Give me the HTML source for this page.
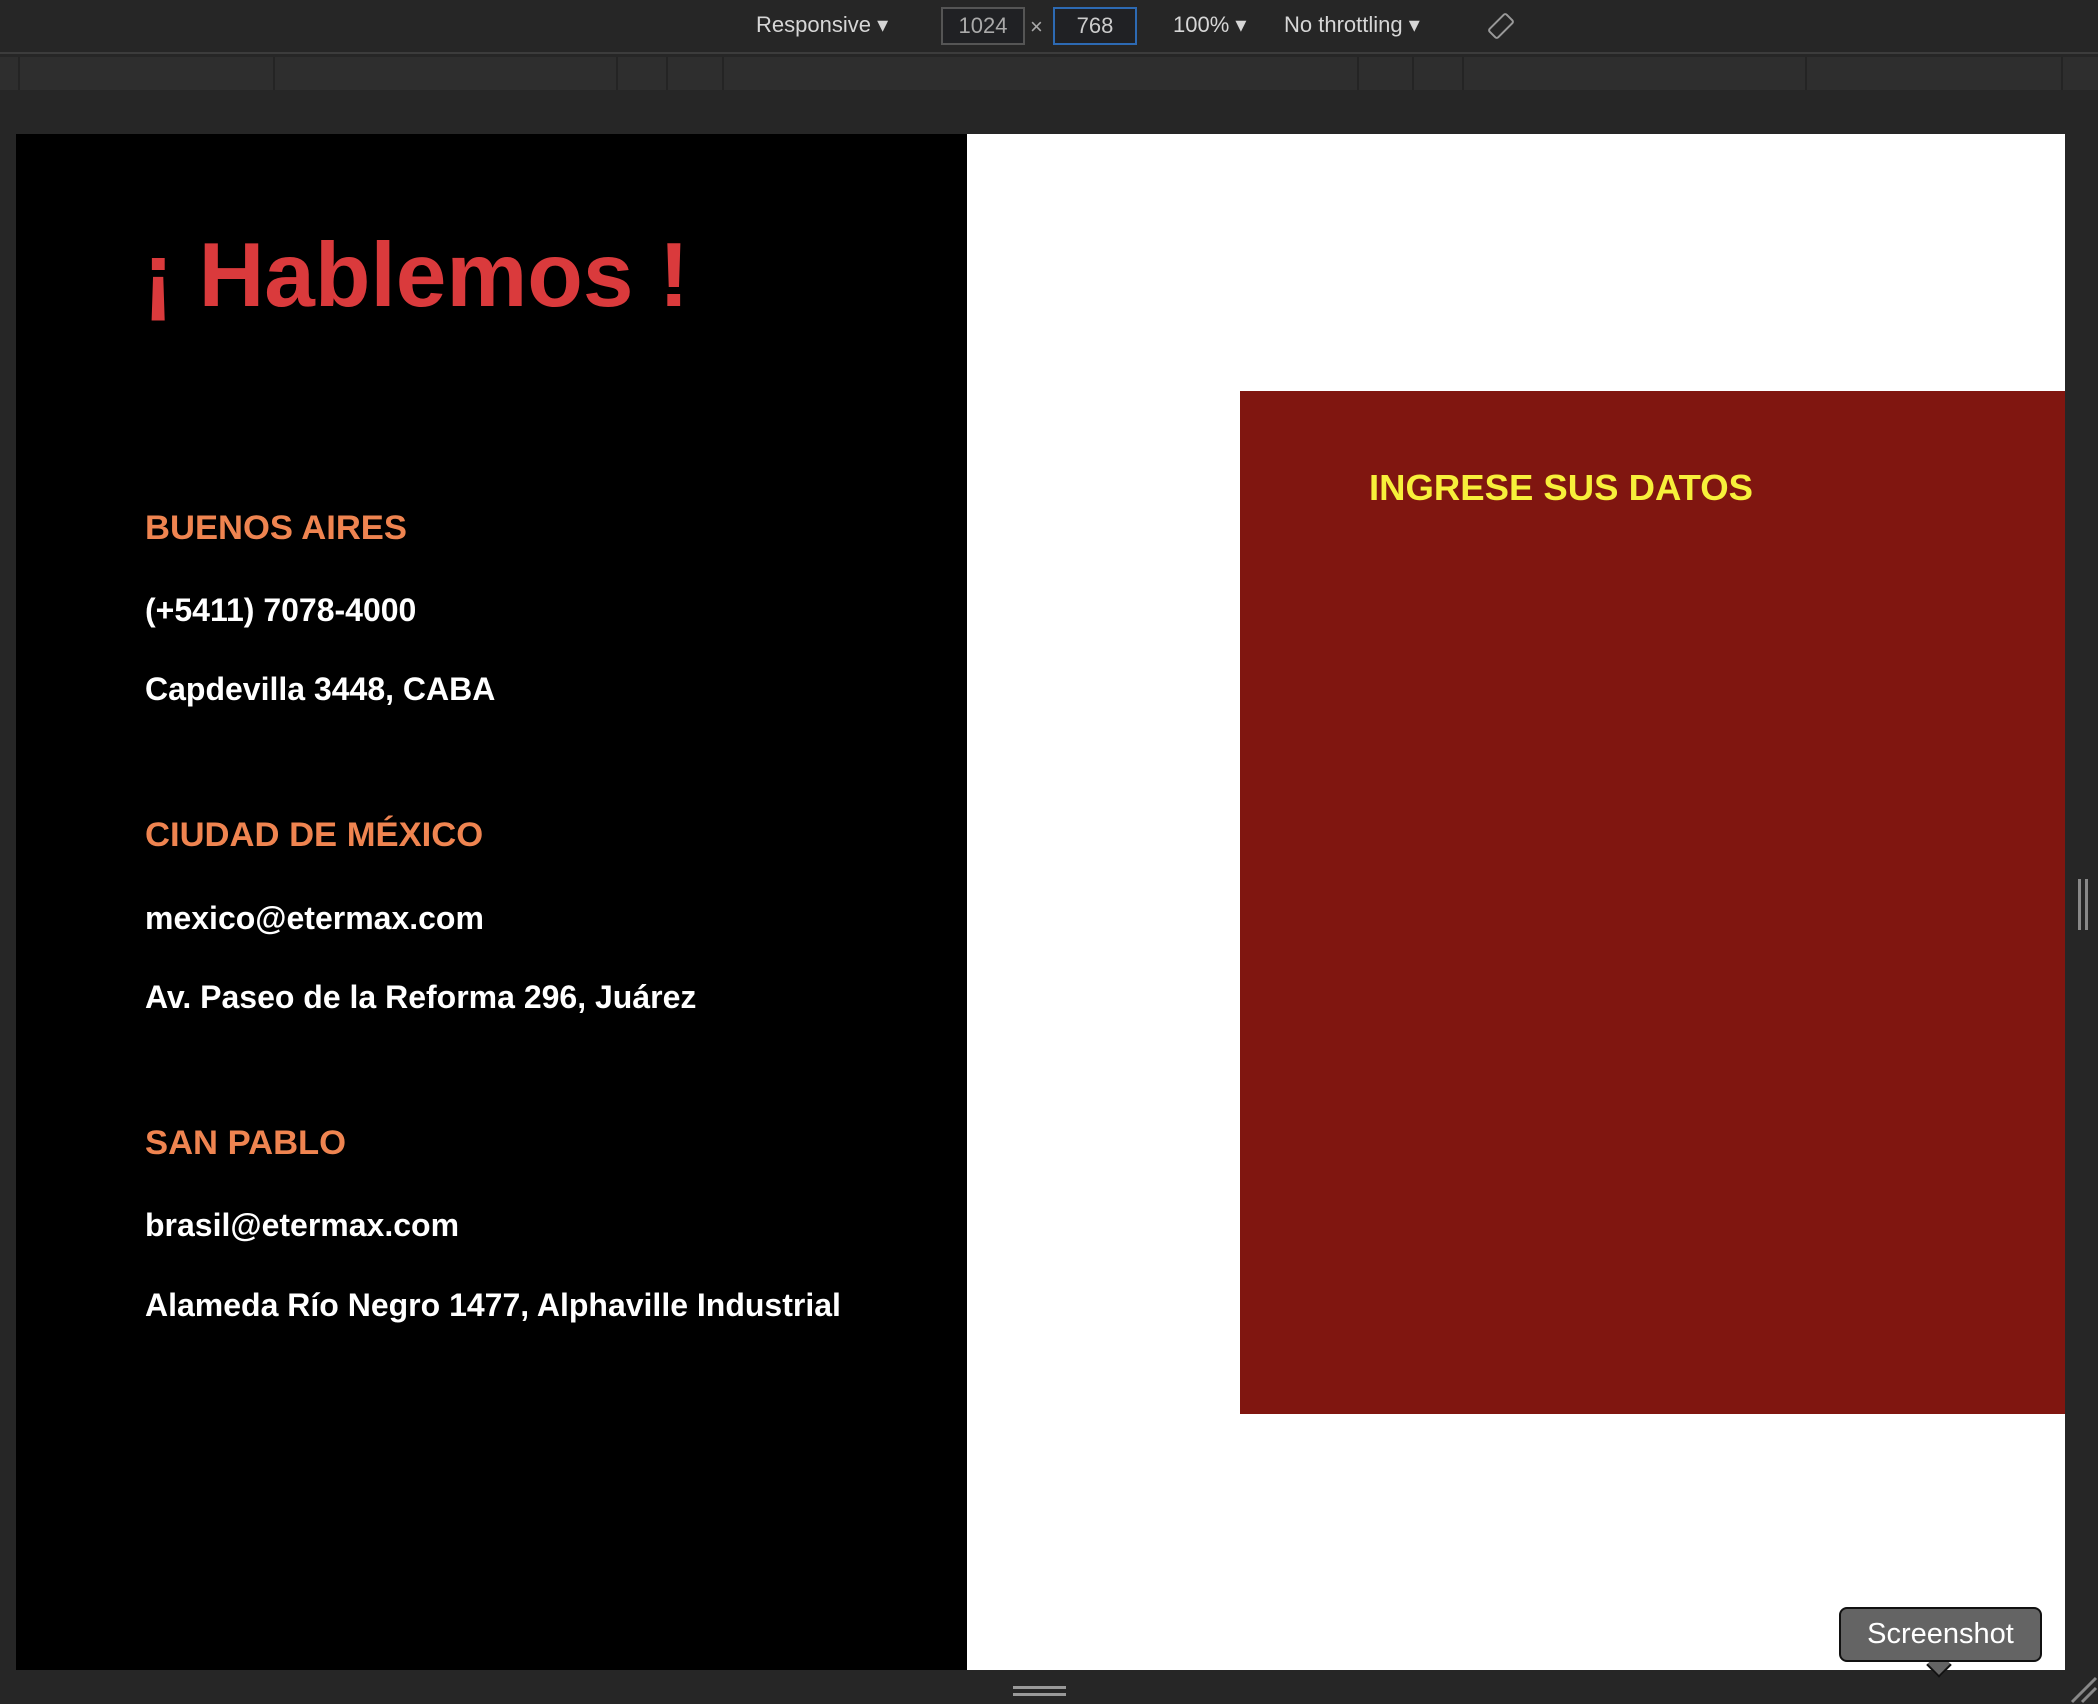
<!DOCTYPE html>
<html><head><meta charset="utf-8"><style>
*{margin:0;padding:0;box-sizing:border-box}
body{width:2098px;height:1704px;background:#262626;position:relative;overflow:hidden;font-family:"Liberation Sans",Arial,sans-serif}
.a{position:absolute}
.tb{color:#d6d6d6;font-size:22px;top:12px}
.inp{top:7px;height:38px;width:84px;border:2px solid #555;background:#202124;color:#aaa;font-size:22px;text-align:center;line-height:34px}
.w{color:#fff;font-weight:bold;font-size:32px;left:145px}
.o{color:#ef8450;font-weight:bold;font-size:34.6px;left:145px}
.sep{top:57px;width:2px;height:33px;background:#242424}
</style></head><body>
<div class="a" style="left:0;top:0;width:2098px;height:52px;background:#262626"></div>
<div class="a" style="left:0;top:52px;width:2098px;height:2px;background:#3c3c3c"></div>
<div class="a" style="left:0;top:57px;width:2098px;height:33px;background:#2e2e2e"></div>
<div class="a sep" style="left:18px"></div><div class="a sep" style="left:273px"></div><div class="a sep" style="left:616px"></div><div class="a sep" style="left:666px"></div><div class="a sep" style="left:722px"></div><div class="a sep" style="left:1357px"></div><div class="a sep" style="left:1412px"></div><div class="a sep" style="left:1462px"></div><div class="a sep" style="left:1805px"></div><div class="a sep" style="left:2061px"></div>
<div class="a tb" style="left:756px">Responsive ▾</div>
<div class="a inp" style="left:941px">1024</div>
<div class="a tb" style="left:1030px;top:14px;color:#aaa">×</div>
<div class="a inp" style="left:1053px;border-color:#2d6ab3;color:#ccc">768</div>
<div class="a tb" style="left:1173px">100% ▾</div>
<div class="a tb" style="left:1284px">No throttling ▾</div>
<svg class="a" style="left:1486px;top:11px" width="30" height="30"><rect x="9" y="3" width="12" height="24" rx="2" transform="rotate(45 15 15)" fill="none" stroke="#999" stroke-width="2"/></svg>
<div class="a" style="left:16px;top:134px;width:951px;height:1536px;background:#000"></div>
<div class="a" style="left:967px;top:134px;width:1098px;height:1536px;background:#fff"></div>
<div class="a" style="left:1240px;top:391px;width:825px;height:1023px;background:#801610"></div>
<div class="a" style="left:1369px;top:467px;color:#f7f03a;font-weight:bold;font-size:36.5px">INGRESE SUS DATOS</div>
<div class="a" style="left:143px;top:224px;color:#da3a3c;font-weight:bold;font-size:91px">¡ Hablemos !</div>
<div class="a o" style="top:509px">BUENOS AIRES</div>
<div class="a w" style="top:592px">(+5411) 7078-4000</div>
<div class="a w" style="top:671px">Capdevilla 3448, CABA</div>
<div class="a o" style="top:816px">CIUDAD DE MÉXICO</div>
<div class="a w" style="top:900px">mexico@etermax.com</div>
<div class="a w" style="top:979px">Av. Paseo de la Reforma 296, Juárez</div>
<div class="a o" style="top:1124px">SAN PABLO</div>
<div class="a w" style="top:1207px">brasil@etermax.com</div>
<div class="a w" style="top:1287px">Alameda Río Negro 1477, Alphaville Industrial</div>
<div class="a" style="left:1013px;top:1686px;width:53px;height:3px;background:#999"></div>
<div class="a" style="left:1013px;top:1693px;width:53px;height:3px;background:#999"></div>
<div class="a" style="left:2078px;top:879px;width:3px;height:51px;background:#888"></div>
<div class="a" style="left:2085px;top:879px;width:3px;height:51px;background:#888"></div>
<div class="a" style="left:1930px;top:1656px;width:18px;height:18px;background:#646464;transform:rotate(45deg);border-right:2px solid #111;border-bottom:2px solid #111"></div>
<div class="a" style="left:1839px;top:1607px;width:203px;height:55px;background:#646464;border:2px solid #111;border-radius:8px;color:#fff;font-size:29px;text-align:center;line-height:50px">Screenshot</div>
<svg class="a" style="left:2068px;top:1674px" width="30" height="30"><path d="M4 28L28 4M14 28L28 14" stroke="#888" stroke-width="3"/></svg>
</body></html>
